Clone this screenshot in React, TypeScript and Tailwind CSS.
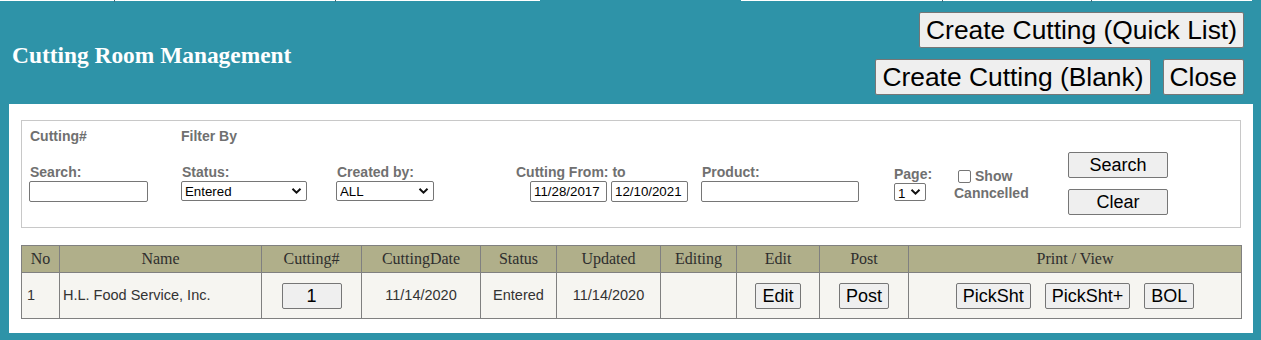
import React from 'react';

const lbl = "block text-[14px] leading-[16px] font-bold text-[#707070] whitespace-nowrap";
const btn = "rounded-[2px] border border-[#767676] bg-[#efefef] text-black leading-none whitespace-nowrap";
const field = "rounded-[2px] border border-[#767676] bg-white px-[3px] text-[13.3px] text-black outline-none";
const th = "border border-[#808080] font-normal text-[16px] text-[#2e2e2e] text-center font-['Liberation_Serif',serif]";
const td = "border border-[#808080] text-[14.5px] text-[#333] text-center";

const Chevron = () => (
  <svg width="11" height="7" viewBox="0 0 11 7" className="pointer-events-none absolute right-[5px] top-1/2 -translate-y-1/2">
    <path d="M1.5 1.2 L5.5 5.2 L9.5 1.2" fill="none" stroke="#111" strokeWidth="2" />
  </svg>
);

function Select({ value, className }: { value: string; className: string }) {
  return (
    <div className={`relative ${className}`}>
      <select
        defaultValue={value}
        className="block h-full w-full appearance-none rounded-[2px] border border-[#767676] bg-white pl-[3px] text-[13.3px] text-black outline-none"
      >
        <option>{value}</option>
      </select>
      <Chevron />
    </div>
  );
}

const TopTabs = () => (
  <div className="flex h-[3px] items-start">
    <div className="h-px w-[114px] bg-white" />
    <div className="h-[2px] w-px bg-[#3d6f7c]" />
    <div className="h-px w-[220px] bg-white" />
    <div className="h-[2px] w-px bg-[#3d6f7c]" />
    <div className="h-px w-[204px] bg-white" />
    <div className="w-[201px]" />
    <div className="h-px w-[201px] bg-white" />
    <div className="h-[2px] w-px bg-[#3d6f7c]" />
    <div className="h-px w-[148px] bg-white" />
    <div className="h-[2px] w-px bg-[#3d6f7c]" />
    <div className="h-px w-[160px] bg-white" />
  </div>
);

export default function App() {
  return (
    <div className="h-[340px] w-[1261px] overflow-hidden bg-[#2e93a8] font-['Liberation_Sans',Arial,sans-serif]">
      <TopTabs />
      {/* header */}
      <div className="flex h-[101px] items-start justify-between pr-[17px]">
        <h1 className="pl-[12px] pt-[39px] font-['Liberation_Serif',serif] text-[23.4px] leading-[26px] font-bold text-white">
          Cutting Room Management
        </h1>
        <div className="flex flex-col items-end gap-[11px] pt-[9px]">
          <button className={`${btn} h-[36px] px-[6px] text-[26.4px]`}>Create Cutting (Quick List)</button>
          <div className="flex gap-[12px]">
            <button className={`${btn} h-[36px] px-[6px] text-[26.4px]`}>Create Cutting (Blank)</button>
            <button className={`${btn} h-[36px] px-[6px] text-[26.4px]`}>Close</button>
          </div>
        </div>
      </div>

      {/* panel */}
      <div className="ml-[9px] mr-[8px] h-[229px] bg-white px-[12px] pt-[16px]">
        {/* filter box */}
        <div className="flex h-[108px] border border-[#c8c8c8] pl-[7px] pt-[7px]">
          <div className="flex w-[152px] flex-col">
            <span className={`${lbl} pl-px`}>Cutting#</span>
            <span className={`${lbl} mt-[20px] pl-px`}>Search:</span>
            <input className={`${field} mt-[1px] h-[21px] w-[119px]`} />
          </div>
          <div className="flex w-[155px] flex-col">
            <span className={lbl}>Filter By</span>
            <span className={`${lbl} mt-[20px] pl-px`}>Status:</span>
            <Select value="Entered" className="mt-[1px] h-[20px] w-[126px]" />
          </div>
          <div className="flex w-[180px] flex-col pt-[36px]">
            <span className={`${lbl} pl-px`}>Created by:</span>
            <Select value="ALL" className="mt-[1px] h-[20px] w-[98px]" />
          </div>
          <div className="flex w-[185px] flex-col pt-[36px]">
            <span className={lbl}>Cutting From: to</span>
            <div className="mt-[1px] flex gap-[4px] pl-[14px]">
              <input defaultValue="11/28/2017" className={`${field} h-[21px] w-[77px]`} />
              <input defaultValue="12/10/2021" className={`${field} h-[21px] w-[77px]`} />
            </div>
          </div>
          <div className="flex w-[193px] flex-col pt-[36px]">
            <span className={`${lbl} pl-px`}>Product:</span>
            <input className={`${field} mt-[1px] h-[21px] w-[158px]`} />
          </div>
          <div className="flex w-[60px] flex-col pt-[38px]">
            <span className={lbl}>Page:</span>
            <Select value="1" className="mt-[1px] h-[18px] w-[32px]" />
          </div>
          <div className="flex w-[114px] flex-col pt-[40px]">
            <div className="flex h-[16px] items-center">
              <span className="ml-[4px] h-[13px] w-[13px] rounded-[2px] border border-[#767676] bg-white" />
              <span className={`${lbl} ml-[4px]`}>Show</span>
            </div>
            <span className={`${lbl} mt-[1px]`}>Canncelled</span>
          </div>
          <div className="flex w-[100px] flex-col gap-[11px] pt-[24px]">
            <button className={`${btn} h-[26px] w-[100px] text-[18px]`}>Search</button>
            <button className={`${btn} h-[26px] w-[100px] text-[18px]`}>Clear</button>
          </div>
        </div>

        {/* table */}
        <table className="mt-[17px] w-[1220px] table-fixed border-collapse">
          <colgroup>
            <col className="w-[38px]" />
            <col className="w-[202px]" />
            <col className="w-[100px]" />
            <col className="w-[119px]" />
            <col className="w-[76px]" />
            <col className="w-[104px]" />
            <col className="w-[76px]" />
            <col className="w-[83px]" />
            <col className="w-[89px]" />
            <col className="w-[333px]" />
          </colgroup>
          <thead>
            <tr className="h-[27px] bg-[#b0af8a]">
              <th className={th}>No</th>
              <th className={th}>Name</th>
              <th className={th}>Cutting#</th>
              <th className={th}>CuttingDate</th>
              <th className={th}>Status</th>
              <th className={th}>Updated</th>
              <th className={th}>Editing</th>
              <th className={th}>Edit</th>
              <th className={th}>Post</th>
              <th className={th}>Print / View</th>
            </tr>
          </thead>
          <tbody>
            <tr className="h-[46px] bg-[#f6f5f1]">
              <td className={`${td} pl-[5px] text-left`}>1</td>
              <td className={`${td} pl-[3px] text-left`}>H.L. Food Service, Inc.</td>
              <td className={td}>
                <button className={`${btn} h-[26px] w-[60px] text-[18px]`}>1</button>
              </td>
              <td className={td}>11/14/2020</td>
              <td className={td}>Entered</td>
              <td className={td}>11/14/2020</td>
              <td className={td}></td>
              <td className={td}>
                <button className={`${btn} h-[26px] px-[6px] text-[18px]`}>Edit</button>
              </td>
              <td className={td}>
                <button className={`${btn} h-[26px] px-[6px] text-[18px]`}>Post</button>
              </td>
              <td className={td}>
                <div className="flex justify-center gap-[14px]">
                  <button className={`${btn} h-[26px] px-[6px] text-[18px]`}>PickSht</button>
                  <button className={`${btn} h-[26px] px-[6px] text-[18px]`}>PickSht+</button>
                  <button className={`${btn} h-[26px] px-[6px] text-[18px]`}>BOL</button>
                </div>
              </td>
            </tr>
          </tbody>
        </table>
      </div>
    </div>
  );
}
